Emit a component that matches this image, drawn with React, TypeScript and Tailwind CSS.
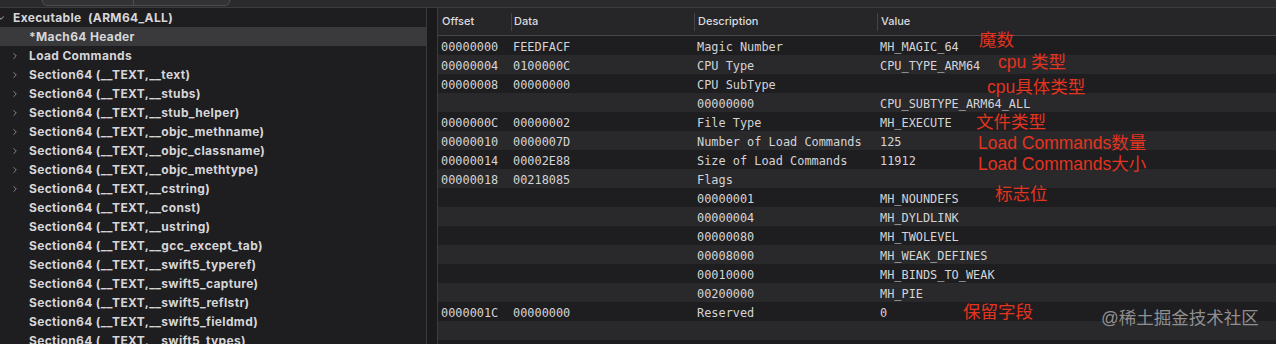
import { ChevronRight, ChevronDown } from "lucide-react";

const sans = "font-['Inter','Liberation_Sans',sans-serif]";
const mono = "font-['DejaVu_Sans_Mono',monospace]";
const cjk = "font-['Liberation_Sans','Noto_Sans_CJK_SC',sans-serif]";

type TreeItem = { label: string; arrow: boolean; selected?: boolean };

const tree: TreeItem[] = [
  { label: "*Mach64 Header", arrow: false, selected: true },
  { label: "Load Commands", arrow: true },
  { label: "Section64 (__TEXT,__text)", arrow: true },
  { label: "Section64 (__TEXT,__stubs)", arrow: true },
  { label: "Section64 (__TEXT,__stub_helper)", arrow: true },
  { label: "Section64 (__TEXT,__objc_methname)", arrow: true },
  { label: "Section64 (__TEXT,__objc_classname)", arrow: true },
  { label: "Section64 (__TEXT,__objc_methtype)", arrow: true },
  { label: "Section64 (__TEXT,__cstring)", arrow: true },
  { label: "Section64 (__TEXT,__const)", arrow: false },
  { label: "Section64 (__TEXT,__ustring)", arrow: false },
  { label: "Section64 (__TEXT,__gcc_except_tab)", arrow: false },
  { label: "Section64 (__TEXT,__swift5_typeref)", arrow: false },
  { label: "Section64 (__TEXT,__swift5_capture)", arrow: false },
  { label: "Section64 (__TEXT,__swift5_reflstr)", arrow: false },
  { label: "Section64 (__TEXT,__swift5_fieldmd)", arrow: false },
  { label: "Section64 (__TEXT,__swift5_types)", arrow: false },
];

const rows: [string, string, string, string][] = [
  ["00000000", "FEEDFACF", "Magic Number", "MH_MAGIC_64"],
  ["00000004", "0100000C", "CPU Type", "CPU_TYPE_ARM64"],
  ["00000008", "00000000", "CPU SubType", ""],
  ["", "", "00000000", "CPU_SUBTYPE_ARM64_ALL"],
  ["0000000C", "00000002", "File Type", "MH_EXECUTE"],
  ["00000010", "0000007D", "Number of Load Commands", "125"],
  ["00000014", "00002E88", "Size of Load Commands", "11912"],
  ["00000018", "00218085", "Flags", ""],
  ["", "", "00000001", "MH_NOUNDEFS"],
  ["", "", "00000004", "MH_DYLDLINK"],
  ["", "", "00000080", "MH_TWOLEVEL"],
  ["", "", "00008000", "MH_WEAK_DEFINES"],
  ["", "", "00010000", "MH_BINDS_TO_WEAK"],
  ["", "", "00200000", "MH_PIE"],
  ["0000001C", "00000000", "Reserved", "0"],
  ["", "", "", ""],
  ["", "", "", ""],
];

// red annotations drawn over the table (coords relative to the table panel)
const notes = [
  { text: "魔数", x: 541, y: 22 },
  { text: "cpu 类型", x: 560, y: 44 },
  { text: "cpu具体类型", x: 549, y: 69 },
  { text: "文件类型", x: 538, y: 104 },
  { text: "Load Commands数量", x: 540, y: 125 },
  { text: "Load Commands大小", x: 540, y: 146 },
  { text: "标志位", x: 557, y: 176 },
  { text: "保留字段", x: 525, y: 294 },
];

const pads = ["pl-[3px]", "pl-[2px]", "pl-[3px]", "pl-[3px]"];

function Tree() {
  return (
    <div className={`w-[427px] shrink-0 bg-[#1e1d20] ${sans} text-[12px] tracking-[0.35px] font-bold text-[#d6d6d8] border-r border-[#3a3a3c]`}>
      <div className="h-[19px] flex items-center">
        <ChevronDown size={10} strokeWidth={2.5} className="text-[#9a9a9c] -ml-[4px] mr-[7px]" />
        <span>Executable&nbsp; (ARM64_ALL)</span>
      </div>
      {tree.map((t) => (
        <div key={t.label} className={`h-[19px] flex items-center ${t.selected ? "bg-[#3a393c]" : ""}`}>
          <div className="w-[29px] flex justify-end pr-[9px]">
            {t.arrow && <ChevronRight size={10} strokeWidth={2} className="text-[#9a9a9c]" />}
          </div>
          <span className="whitespace-nowrap">{t.label}</span>
        </div>
      ))}
    </div>
  );
}

function Table() {
  const cols = "grid grid-cols-[73px_183px_183px_1fr]";
  return (
    <div className="relative flex-1 border-l border-[#3c3c3e] bg-[#1e1d20] overflow-hidden">
      <div className={`${cols} h-[28px] items-center bg-[#262528] border-b border-[#47464a] ${sans} text-[11px] font-medium text-[#dcdcde]`}>
        {["Offset", "Data", "Description", "Value"].map((h, i) => (
          <div key={h} className={`h-[18px] flex items-center ${pads[i]} ${i > 0 ? "border-l border-[#454448]" : "pl-[4px]"}`}>
            {h}
          </div>
        ))}
      </div>
      {rows.map((r, i) => (
        <div
          key={i}
          className={`${cols} h-[19px] items-center pt-[3px] ${mono} text-[11.9px] text-[#d4d4d6] ${i % 2 ? "bg-[#29282b]" : "bg-[#1e1d20]"}`}
        >
          {r.map((c, j) => (
            <div key={j} className={`whitespace-nowrap ${pads[j]}`}>
              {c}
            </div>
          ))}
        </div>
      ))}
      {notes.map((n) => (
        <div
          key={n.text}
          className={`absolute ${cjk} text-[17.5px] leading-[20px] text-[#e3341f] whitespace-nowrap`}
          style={{ left: n.x, top: n.y }}
        >
          {n.text}
        </div>
      ))}
      <div className={`absolute left-[663px] top-[299px] ${cjk} text-[17.5px] leading-[22px] text-[#8f8f92] whitespace-nowrap`}>
        @稀土掘金技术社区
      </div>
    </div>
  );
}

export default function App() {
  return (
    <div className="w-[1276px] h-[344px] overflow-hidden bg-[#1e1d20] flex flex-col">
      <div className="h-[8px] shrink-0 bg-[#2b2a2d] border-b border-[#3c3b3e] relative">
        <div className="absolute left-[42px] top-[-6px] w-[188px] h-[12px] rounded-[5px] border border-[#4d4c50] bg-[#333235] flex">
          <div className="w-[91px] border-r border-[#4d4c50]" />
        </div>
      </div>
      <div className="flex flex-1 min-h-0">
        <Tree />
        <div className="w-[10px] shrink-0 bg-[#1a191c]" />
        <Table />
      </div>
    </div>
  );
}
